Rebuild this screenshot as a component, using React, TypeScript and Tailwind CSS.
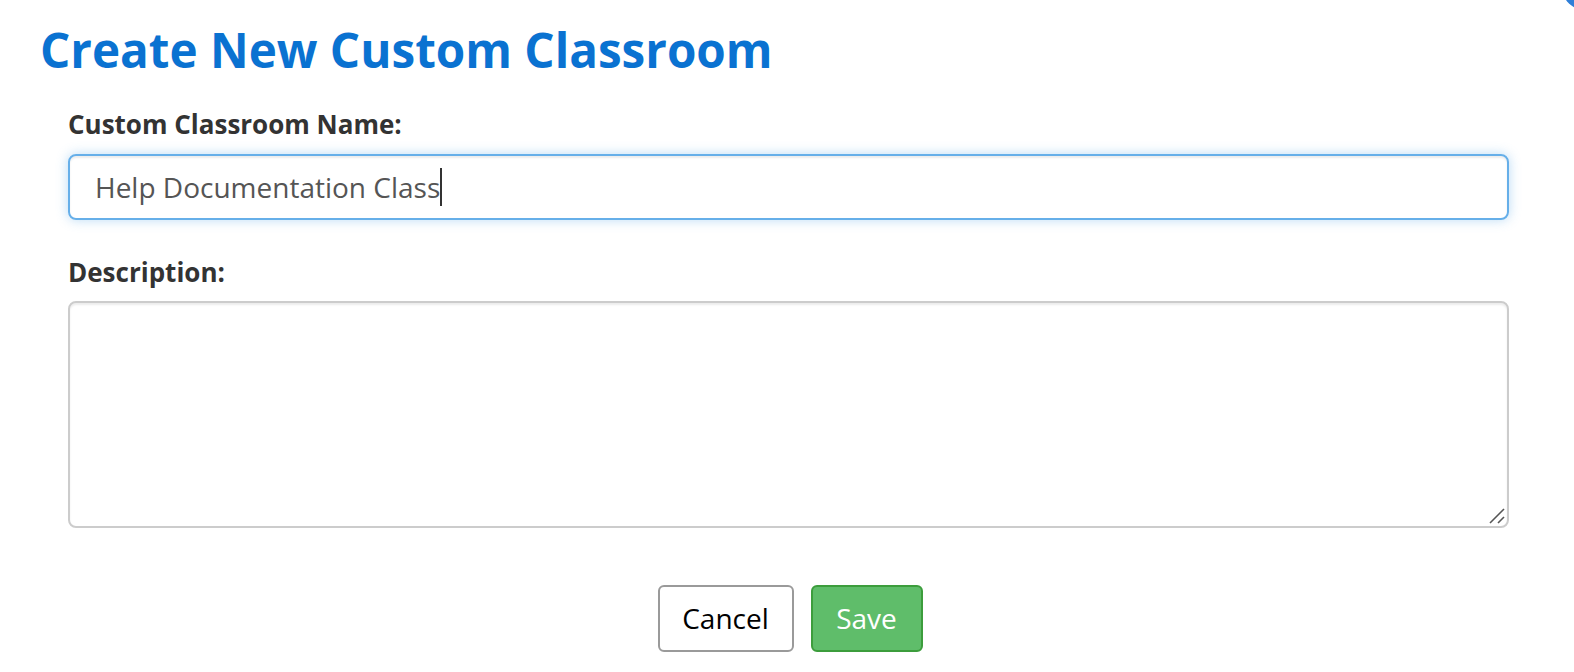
import { useState } from 'react';

// Create New Custom Classroom - form dialog body
export default function App() {
  const [description, setDescription] = useState('');

  return (
    <div className="relative w-[1574px] h-[672px] overflow-hidden bg-white font-['Open_Sans',sans-serif]">
      {/* corner of the close button, mostly off-screen */}
      <div className="absolute -right-[34px] -top-[36px] w-[46px] h-[46px] rounded-full bg-[#2f7fd8]" />

      <h1 className="ml-[40px] mt-[21px] text-[47.6px] leading-[1.2] font-bold text-[#0a72d1]">
        Create New Custom Classroom
      </h1>

      <div className="pl-[68px] pr-[65px]">
        <label className="block mt-[28px] text-[26px] leading-[1.4] font-bold text-[#333]">
          Custom Classroom Name:
        </label>
        <div className="mt-[11px] h-[66px] flex items-center pl-[25px] border-2 border-[#66afe9] rounded-[8px] shadow-[inset_0_2px_2px_rgba(0,0,0,0.075),0_0_12px_rgba(102,175,233,0.45)]">
          <span className="text-[28px] text-[#555]">Help Documentation Class</span>
          <span className="w-[2px] h-[38px] bg-[#333]" />
        </div>

        <label className="block mt-[34px] text-[26px] leading-[1.4] font-bold text-[#333]">
          Description:
        </label>
        <div className="relative mt-[11px]">
          <textarea
            value={description}
            onChange={(e) => setDescription(e.target.value)}
            className="block w-full h-[227px] resize-none border-2 border-[#ccc] rounded-[8px] shadow-[inset_0_2px_2px_rgba(0,0,0,0.075)] outline-none text-[28px] text-[#555] px-[24px] py-[12px]"
          />
          {/* resize grip */}
          <svg className="absolute right-[4px] bottom-[4px]" width="16" height="16" viewBox="0 0 16 16">
            <line x1="1" y1="15" x2="15" y2="1" stroke="#555" strokeWidth="1.6" />
            <line x1="9" y1="15" x2="15" y2="9" stroke="#555" strokeWidth="1.6" />
          </svg>
        </div>

        <div className="flex justify-center gap-[17px] mt-[57px] pl-[3px]">
          <button className="w-[136px] h-[67px] border-2 border-[#9a9a9a] rounded-[6px] bg-white text-[28px] text-black">
            Cancel
          </button>
          <button className="w-[112px] h-[67px] border-2 border-[#3c9d3c] rounded-[6px] bg-[#5fbd6a] text-[28px] text-white">
            Save
          </button>
        </div>
      </div>
    </div>
  );
}
